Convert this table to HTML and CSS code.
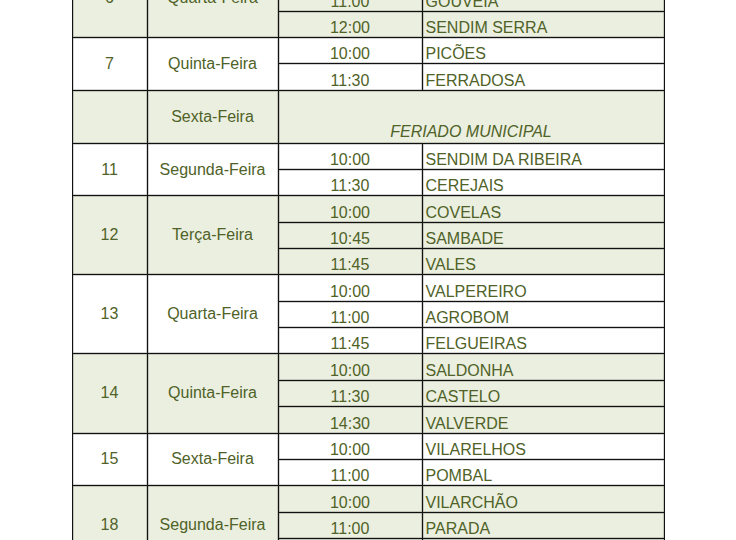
FILE: index.html
```html
<!DOCTYPE html>
<html lang="pt">
<head>
<meta charset="utf-8">
<title>Calendário</title>
<link rel="stylesheet" href="styles.css">
</head>
<body>
<table class="sched">
  <colgroup>
    <col class="c-num"><col class="c-day"><col class="c-time"><col class="c-place">
  </colgroup>
  <tbody class="g">
    <tr><td class="num" rowspan="3">6</td><td class="day" rowspan="3">Quarta-Feira</td><td class="time">10:00</td><td class="place">PALAÇOULO</td></tr>
    <tr><td class="time">11:00</td><td class="place">GOUVEIA</td></tr>
    <tr><td class="time">12:00</td><td class="place">SENDIM SERRA</td></tr>
  </tbody>
  <tbody class="w">
    <tr><td class="num" rowspan="2">7</td><td class="day" rowspan="2">Quinta-Feira</td><td class="time">10:00</td><td class="place">PICÕES</td></tr>
    <tr><td class="time">11:30</td><td class="place">FERRADOSA</td></tr>
  </tbody>
  <tbody class="g">
    <tr class="hol"><td class="num"></td><td class="day">Sexta-Feira</td><td class="holiday" colspan="2">FERIADO MUNICIPAL</td></tr>
  </tbody>
  <tbody class="w">
    <tr><td class="num" rowspan="2">11</td><td class="day" rowspan="2">Segunda-Feira</td><td class="time">10:00</td><td class="place">SENDIM DA RIBEIRA</td></tr>
    <tr><td class="time">11:30</td><td class="place">CEREJAIS</td></tr>
  </tbody>
  <tbody class="g">
    <tr><td class="num" rowspan="3">12</td><td class="day" rowspan="3">Terça-Feira</td><td class="time">10:00</td><td class="place">COVELAS</td></tr>
    <tr><td class="time">10:45</td><td class="place">SAMBADE</td></tr>
    <tr><td class="time">11:45</td><td class="place">VALES</td></tr>
  </tbody>
  <tbody class="w">
    <tr><td class="num" rowspan="3">13</td><td class="day" rowspan="3">Quarta-Feira</td><td class="time">10:00</td><td class="place">VALPEREIRO</td></tr>
    <tr><td class="time">11:00</td><td class="place">AGROBOM</td></tr>
    <tr><td class="time">11:45</td><td class="place">FELGUEIRAS</td></tr>
  </tbody>
  <tbody class="g">
    <tr><td class="num" rowspan="3">14</td><td class="day" rowspan="3">Quinta-Feira</td><td class="time">10:00</td><td class="place">SALDONHA</td></tr>
    <tr><td class="time">11:30</td><td class="place">CASTELO</td></tr>
    <tr><td class="time">14:30</td><td class="place">VALVERDE</td></tr>
  </tbody>
  <tbody class="w">
    <tr><td class="num" rowspan="2">15</td><td class="day" rowspan="2">Sexta-Feira</td><td class="time">10:00</td><td class="place">VILARELHOS</td></tr>
    <tr><td class="time">11:00</td><td class="place">POMBAL</td></tr>
  </tbody>
  <tbody class="g">
    <tr><td class="num" rowspan="3">18</td><td class="day" rowspan="3">Segunda-Feira</td><td class="time">10:00</td><td class="place">VILARCHÃO</td></tr>
    <tr><td class="time">11:00</td><td class="place">PARADA</td></tr>
    <tr><td class="time">12:00</td><td class="place">VALE DA PORCA</td></tr>
  </tbody>
</table>
</body>
</html>
```

FILE: styles.css
```css
html, body {
  margin: 0;
  padding: 0;
  background: #ffffff;
  overflow: hidden;
}

.sched {
  border-collapse: collapse;
  width: 592px;
  margin: -42px auto 0;
  table-layout: fixed;
  font-family: "Liberation Sans", Arial, sans-serif;
  font-size: 16px;
  color: #4f6228;
}

.c-num { width: 75px; }
.c-day { width: 131px; }
.c-time { width: 144px; }
.c-place { width: 242px; }

.sched td {
  border: 1px solid #111;
  box-shadow: inset 0 0 0 0.5px rgba(0, 0, 0, 0.35);
  height: 25.35px;
  padding: 0 2px;
  line-height: 18px;
  vertical-align: bottom;
  white-space: nowrap;
}

.g td { background: #ebefdf; }
.w td { background: #ffffff; }

.sched td.num,
.sched td.day {
  text-align: center;
  vertical-align: middle;
}

.sched td.time { text-align: center; }
.sched td.place { text-align: left; padding-left: 3px; }

.hol td { height: 52px; }

.sched td.holiday {
  height: 50px;
  text-align: center;
  font-style: italic;
  padding-bottom: 2px;
}
```
